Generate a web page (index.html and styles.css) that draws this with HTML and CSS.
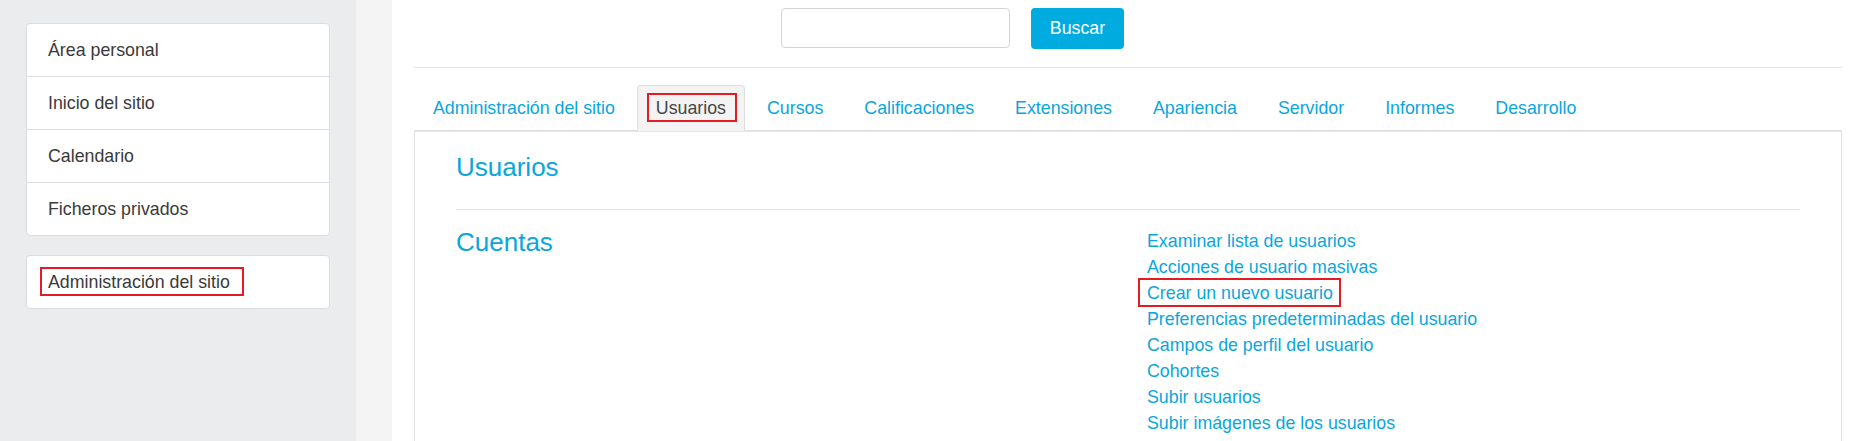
FILE: index.html
```html
<!DOCTYPE html>
<html lang="es">
<head>
<meta charset="utf-8">
<title>Usuarios - Administración del sitio</title>
<link rel="stylesheet" href="styles.css">
</head>
<body>
<div class="page">
  <aside class="sidebar">
    <nav class="card">
      <a class="card-item" href="#">Área personal</a>
      <a class="card-item" href="#">Inicio del sitio</a>
      <a class="card-item" href="#">Calendario</a>
      <a class="card-item" href="#">Ficheros privados</a>
    </nav>
    <nav class="card">
      <a class="card-item" href="#"><span class="mark mark-wide">Administración del sitio</span></a>
    </nav>
  </aside>
  <div class="gutter"></div>
  <main class="main">
    <header class="topbar">
      <form class="search">
        <input class="search-input" type="text" aria-label="Buscar">
        <button class="search-btn" type="button">Buscar</button>
      </form>
    </header>
    <ul class="tabs">
      <li><a class="tab" href="#">Administración del sitio</a></li>
      <li><a class="tab active" href="#"><span class="mark">Usuarios</span></a></li>
      <li><a class="tab" href="#">Cursos</a></li>
      <li><a class="tab" href="#">Calificaciones</a></li>
      <li><a class="tab" href="#">Extensiones</a></li>
      <li><a class="tab" href="#">Apariencia</a></li>
      <li><a class="tab" href="#">Servidor</a></li>
      <li><a class="tab" href="#">Informes</a></li>
      <li><a class="tab" href="#">Desarrollo</a></li>
    </ul>
    <section class="panel">
      <h2 class="panel-title">Usuarios</h2>
      <div class="group">
        <h3 class="group-title">Cuentas</h3>
        <ul class="links">
          <li><a href="#">Examinar lista de usuarios</a></li>
          <li><a href="#">Acciones de usuario masivas</a></li>
          <li><a href="#"><span class="mark mark-tight">Crear un nuevo usuario</span></a></li>
          <li><a href="#">Preferencias predeterminadas del usuario</a></li>
          <li><a href="#">Campos de perfil del usuario</a></li>
          <li><a href="#">Cohortes</a></li>
          <li><a href="#">Subir usuarios</a></li>
          <li><a href="#">Subir imágenes de los usuarios</a></li>
        </ul>
      </div>
    </section>
  </main>
</div>
</body>
</html>
```

FILE: styles.css
```css
html, body {
  margin: 0;
  padding: 0;
  height: 100%;
}

body {
  font-family: "Liberation Sans", Arial, Helvetica, sans-serif;
  font-size: 17.8px;
  color: #333;
  background: #fff;
  overflow: hidden;
}

a {
  text-decoration: none;
}

.page {
  display: flex;
  height: 441px;
}

/* Sidebar */
.sidebar {
  width: 356px;
  flex: 0 0 356px;
  box-sizing: border-box;
  background: #ebecee;
  padding: 23px 26px 0;
  display: flex;
  flex-direction: column;
  gap: 19px;
}

.card {
  background: #fff;
  border: 1px solid #dcdddf;
  border-radius: 4px;
  display: flex;
  flex-direction: column;
}

.card-item {
  display: flex;
  align-items: center;
  height: 52px;
  padding-left: 21px;
  color: #3a3a3a;
}

.card-item + .card-item {
  border-top: 1px solid #dcdddf;
}

.gutter {
  width: 36px;
  flex: 0 0 36px;
  background: #f4f4f4;
}

/* Annotation boxes */
.mark {
  position: relative;
  display: inline-block;
  line-height: 20px;
}

.mark::after {
  content: "";
  position: absolute;
  top: -5px;
  bottom: -4px;
  left: -9px;
  right: -11px;
  border: 2px solid #e31b23;
}

.mark-wide::after {
  left: -8px;
  right: -14px;
}

.mark-tight::after {
  left: -9px;
  right: -8px;
}

/* Main */
.main {
  flex: 1;
  min-width: 0;
  padding: 0 19px 0 22px;
  display: flex;
  flex-direction: column;
}

.topbar {
  height: 68px;
  box-sizing: border-box;
  border-bottom: 1px solid #e4e4e4;
}

.search {
  display: flex;
  align-items: flex-start;
  margin: 0 0 0 367px;
  padding-top: 8px;
  gap: 21px;
}

.search-input {
  width: 229px;
  height: 40px;
  box-sizing: border-box;
  border: 1px solid #d5d5d5;
  border-radius: 4px;
  margin: 0;
  padding: 0 8px;
  font: inherit;
}

.search-btn {
  width: 93px;
  height: 41px;
  margin: 0;
  border: none;
  border-radius: 4px;
  background: #00acdf;
  color: #fff;
  font: inherit;
}

/* Tabs */
.tabs {
  list-style: none;
  margin: 17px 0 0;
  padding: 0;
  display: flex;
  border-bottom: 1px solid #dedede;
}

.tab {
  display: block;
  line-height: 44px;
  padding: 0 18px;
  margin-right: 3px;
  margin-bottom: -1px;
  border: 1px solid transparent;
  border-radius: 4px 4px 0 0;
  color: #0aa6dd;
}

.tab.active {
  background: #f3f3f3;
  border-color: #dedede #dedede transparent;
  color: #474747;
}

/* Panel */
.panel {
  flex: 1;
  border: 1px solid #e6e6e6;
  border-bottom: none;
  padding: 0 41px;
}

.panel-title {
  margin: 0;
  padding: 20px 0 26px;
  font-size: 26px;
  font-weight: normal;
  line-height: 31px;
  color: #0aa6dd;
  border-bottom: 1px solid #e4e4e4;
}

.group {
  display: grid;
  grid-template-columns: 691px 1fr;
  align-items: start;
  padding-top: 18px;
}

.group-title {
  margin: 0;
  font-size: 26px;
  font-weight: normal;
  line-height: 28px;
  color: #0aa6dd;
}

.links {
  list-style: none;
  margin: 0;
  padding: 0;
  line-height: 26px;
}

.links a {
  color: #0aa6dd;
}
```
